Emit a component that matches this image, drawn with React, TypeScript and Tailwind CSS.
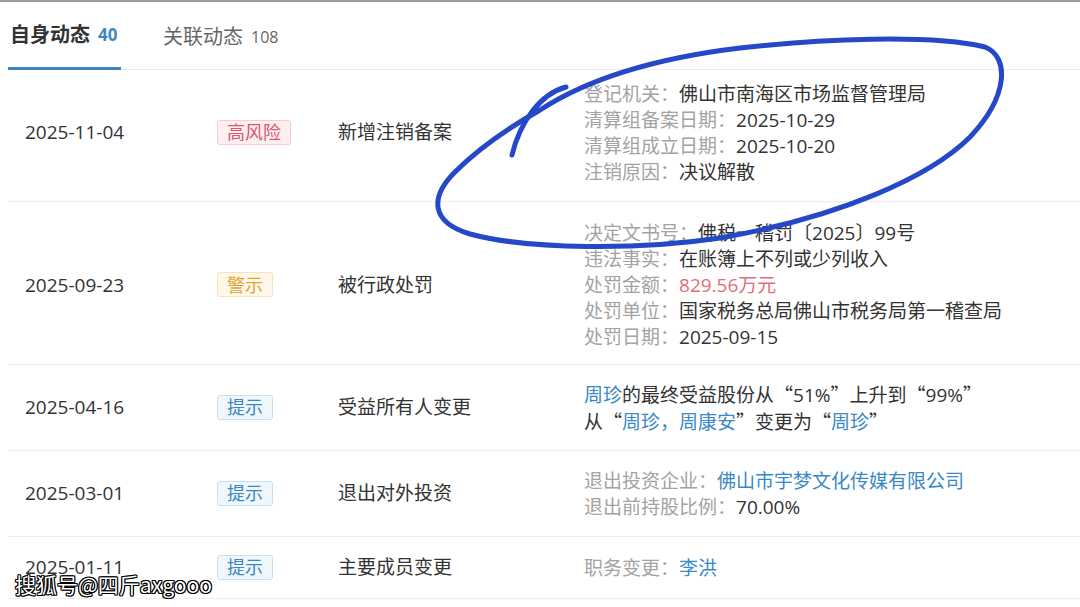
import React from 'react';

type Part = { text: string; tone?: 'label' | 'value' | 'link' | 'red' | 'quote' };

interface EventRow {
  date: string;
  tag: 'danger' | 'warn' | 'info';
  title: string;
  height: string;
  lines: Part[][];
}

const rows: EventRow[] = [
  {
    date: '2025-11-04',
    tag: 'danger',
    title: '新增注销备案',
    height: 'h-[132px] pb-[6px]',
    lines: [
      [{ text: '登记机关：', tone: 'label' }, { text: '佛山市南海区市场监督管理局' }],
      [{ text: '清算组备案日期：', tone: 'label' }, { text: '2025-10-29' }],
      [{ text: '清算组成立日期：', tone: 'label' }, { text: '2025-10-20' }],
      [{ text: '注销原因：', tone: 'label' }, { text: '决议解散' }],
    ],
  },
  {
    date: '2025-09-23',
    tag: 'warn',
    title: '被行政处罚',
    height: 'h-[163px] pt-[4px]',
    lines: [
      [{ text: '决定文书号：', tone: 'label' }, { text: '佛税一稽罚〔2025〕99号' }],
      [{ text: '违法事实：', tone: 'label' }, { text: '在账簿上不列或少列收入' }],
      [{ text: '处罚金额：', tone: 'label' }, { text: '829.56万元', tone: 'red' }],
      [{ text: '处罚单位：', tone: 'label' }, { text: '国家税务总局佛山市税务局第一稽查局' }],
      [{ text: '处罚日期：', tone: 'label' }, { text: '2025-09-15' }],
    ],
  },
  {
    date: '2025-04-16',
    tag: 'info',
    title: '受益所有人变更',
    height: 'h-[86px]',
    lines: [
      [
        { text: '周珍', tone: 'link' },
        { text: '的最终受益股份从' },
        { text: '“', tone: 'quote' },
        { text: '51%' },
        { text: '”', tone: 'quote' },
        { text: '上升到' },
        { text: '“', tone: 'quote' },
        { text: '99%' },
        { text: '”', tone: 'quote' },
      ],
      [
        { text: '从' },
        { text: '“', tone: 'quote' },
        { text: '周珍，周康安', tone: 'link' },
        { text: '”', tone: 'quote' },
        { text: '变更为' },
        { text: '“', tone: 'quote' },
        { text: '周珍', tone: 'link' },
        { text: '”', tone: 'quote' },
      ],
    ],
  },
  {
    date: '2025-03-01',
    tag: 'info',
    title: '退出对外投资',
    height: 'h-[86px]',
    lines: [
      [{ text: '退出投资企业：', tone: 'label' }, { text: '佛山市宇梦文化传媒有限公司', tone: 'link' }],
      [{ text: '退出前持股比例：', tone: 'label' }, { text: '70.00%' }],
    ],
  },
  {
    date: '2025-01-11',
    tag: 'info',
    title: '主要成员变更',
    height: 'h-[62px]',
    lines: [[{ text: '职务变更：', tone: 'label' }, { text: '李洪', tone: 'link' }]],
  },
];

const tagStyles = {
  danger: { label: '高风险', cls: 'bg-[#fdeef0] border-[#f5cdd3] text-[#d9566c]' },
  warn: { label: '警示', cls: 'bg-[#fff8e8] border-[#f9e4b6] text-[#e2a43a]' },
  info: { label: '提示', cls: 'bg-[#eff7fc] border-[#c6e1f2] text-[#3a88c2]' },
};

const toneCls = {
  label: 'text-[#a3a3a3]',
  value: 'text-[#333333]',
  link: 'text-[#3a88c6]',
  red: 'text-[#dd6f78]',
  quote: 'text-[#333333] font-["Noto_Sans_CJK_SC",sans-serif]',
};

function Tag({ kind }: { kind: EventRow['tag'] }) {
  const t = tagStyles[kind];
  return (
    <span className={`inline-flex items-center h-[25px] px-[9px] border rounded-[3px] text-[18px] leading-none ${t.cls}`}>
      {t.label}
    </span>
  );
}

function Row({ row }: { row: EventRow }) {
  return (
    <div className={`flex items-center border-b border-[#eeeeee] ${row.height}`}>
      <div className="w-[209px] pl-[17px] text-[#333333]">{row.date}</div>
      <div className="w-[121px]">
        <Tag kind={row.tag} />
      </div>
      <div className="w-[246px] text-[#333333]">{row.title}</div>
      <div className="flex-1 leading-[26px]">
        {row.lines.map((line, i) => (
          <div key={i} className="whitespace-nowrap">
            {line.map((p, j) => (
              <span key={j} className={toneCls[p.tone ?? 'value']}>
                {p.text}
              </span>
            ))}
          </div>
        ))}
      </div>
    </div>
  );
}

export default function App() {
  return (
    <div className="relative w-[1080px] h-[607px] overflow-hidden bg-white border-t-2 border-[#9b9b9b] font-['Open_Sans','Noto_Sans_CJK_SC',sans-serif] text-[19px]">
      {/* tabs */}
      <div className="flex items-end h-[68px] ml-[8px] border-b border-[#ececec]">
        <div className="flex items-center gap-[8px] h-[67px] w-[113px] pl-[2px] border-b-[3px] border-[#3b83c2] -mb-px">
          <span className="text-[20px] font-bold text-[#333333]">自身动态</span>
          <span className="text-[17px] font-bold text-[#3a8ac2]">40</span>
        </div>
        <div className="flex items-center gap-[8px] h-[67px] ml-[42px] -mb-px">
          <span className="text-[20px] text-[#666666]">关联动态</span>
          <span className="text-[16px] text-[#666666]">108</span>
        </div>
      </div>

      {/* rows */}
      <div className="ml-[8px]">
        {rows.map((r) => (
          <Row key={r.date} row={r} />
        ))}
      </div>

      {/* hand-drawn annotation */}
      <svg className="absolute inset-0 pointer-events-none" width="1080" height="607" viewBox="0 0 1080 607">
        <g fill="none" stroke="#2448c8" strokeWidth="5" strokeLinecap="round" strokeLinejoin="round">
          <path d="M512 153 C520 120 540 92 566 85" />
          <path d="M540 108 C580 82 640 58 740 46 C820 37 930 32 985 45 C1010 55 1008 95 970 135 C930 175 840 215 720 236 C640 248 530 248 470 232 C430 220 430 195 455 170 C480 145 510 125 540 108" />
        </g>
      </svg>

      {/* watermark */}
      <div className="absolute left-[15px] top-[567px] text-[21px] text-white font-['Noto_Sans_CJK_SC',sans-serif] [text-shadow:1px_1px_0_#000,-1px_-1px_0_#000,1px_-1px_0_#000,-1px_1px_0_#000,0_1px_0_#000,0_-1px_0_#000,1px_0_0_#000,-1px_0_0_#000]">
        搜狐号@四斤axgooo
      </div>
    </div>
  );
}
